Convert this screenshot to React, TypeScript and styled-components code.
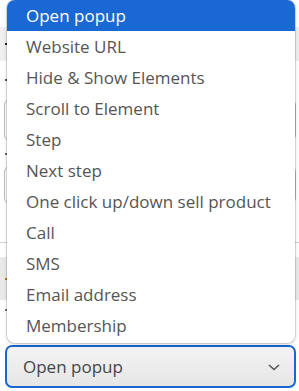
import React from "react";
import styled, { createGlobalStyle } from "styled-components";

const Global = createGlobalStyle`
  html, body { margin: 0; padding: 0; background: #ffffff; }
  body { font-family: "Open Sans", "Noto Sans", sans-serif; width: 299px; height: 391px; overflow: hidden; }
`;

const Page = styled.div`
  position: relative;
  width: 299px;
  height: 391px;
  display: flex;
  flex-direction: column;
  padding: 27px 0 0 0;
  box-sizing: border-box;
`;

const Band = styled.div<{ $h: number; $bg?: string }>`
  height: ${(p) => p.$h}px;
  background: ${(p) => p.$bg || "transparent"};
  display: flex;
  align-items: center;
  padding-left: 5px;
  box-sizing: border-box;
`;

const Mark = styled.span<{ $c?: string }>`
  display: inline-block;
  width: 2px;
  height: 2px;
  background: ${(p) => p.$c || "#333"};
`;

const Field = styled.div<{ $h: number }>`
  height: ${(p) => p.$h}px;
  margin: 0 3px 0 4px;
  border: 1px solid #bdbdbd;
  border-radius: 6px;
`;

const Rule = styled.div`
  height: 1px;
  background: #d0d0d0;
`;

const SelectBox = styled.div`
  margin: auto 3px 3px 5px;
  height: 43px;
  box-sizing: border-box;
  border: 2px solid #1a66d2;
  border-radius: 7px;
  background: linear-gradient(180deg, #f3f3f3 0%, #e6e6e6 100%);
  display: flex;
  align-items: center;
  justify-content: space-between;
  padding: 0 13px 0 16px;
  font-size: 17px;
  color: #454545;
`;

const Popup = styled.ul`
  position: absolute;
  left: 7px;
  top: 0;
  width: 288px;
  height: 343px;
  margin: 0;
  padding: 0;
  list-style: none;
  background: #ffffff;
  border-radius: 8px;
  box-shadow: 0 0 0 1px rgba(0, 0, 0, 0.12), 0 2px 4px rgba(0, 0, 0, 0.15);
  overflow: hidden;
`;

const Option = styled.li<{ $active?: boolean }>`
  height: 31px;
  line-height: 31px;
  padding-left: 19px;
  font-size: 17px;
  color: ${(p) => (p.$active ? "#ffffff" : "#555555")};
  background: ${(p) => (p.$active ? "#1a68d3" : "transparent")};
  white-space: nowrap;
`;

const options = [
  "Open popup",
  "Website URL",
  "Hide & Show Elements",
  "Scroll to Element",
  "Step",
  "Next step",
  "One click up/down sell product",
  "Call",
  "SMS",
  "Email address",
  "Membership",
];

export default function App() {
  return (
    <>
      <Global />
      <Page>
        <Band $h={34} $bg="#efefef">
          <Mark $c="#222" />
        </Band>
        <Band $h={38}>
          <Mark $c="#555" />
        </Band>
        <Field $h={40} />
        <Band $h={25}>
          <Mark $c="#666" />
        </Band>
        <Field $h={36} />
        <Band $h={38} />
        <Rule />
        <Band $h={14} />
        <Band $h={43} $bg="#e9e9e9">
          <Mark $c="#c07a20" />
        </Band>
        <Band $h={20}>
          <Mark $c="#777" />
        </Band>
        <SelectBox>
          <span>Open popup</span>
          <svg width="14" height="14" viewBox="0 0 14 14">
            <path d="M2 5l5 4.5L12 5" fill="none" stroke="#555" strokeWidth="1.6" />
          </svg>
        </SelectBox>
        <Popup>
          {options.map((o, i) => (
            <Option key={o} $active={i === 0}>
              {o}
            </Option>
          ))}
        </Popup>
      </Page>
    </>
  );
}
